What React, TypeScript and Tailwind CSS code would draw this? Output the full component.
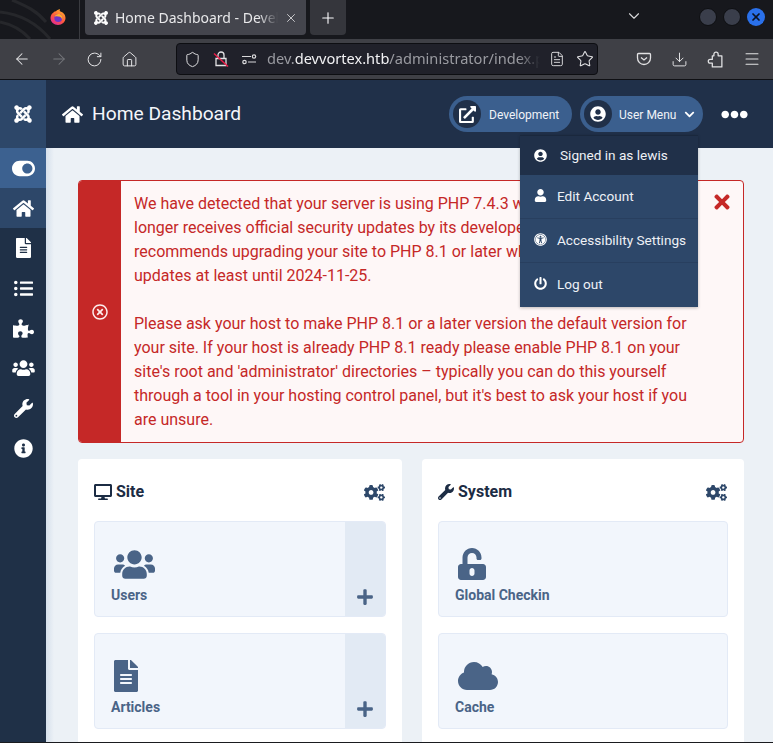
import React from "react";
import { ArrowLeft, ArrowRight, RotateCw, Home, Shield, FileText, Star, Download, Menu, X, Plus, ChevronDown } from "lucide-react";
import { FaHome, FaFileAlt, FaListUl, FaPuzzlePiece, FaUsers, FaWrench, FaInfoCircle, FaToggleOn, FaUserCircle, FaUser, FaUniversalAccess, FaPowerOff, FaExternalLinkAlt, FaCogs, FaDesktop, FaPlus, FaUnlockAlt, FaCloud, FaTimes, FaChevronDown, FaJoomla, FaEllipsisH, FaRegTimesCircle } from "react-icons/fa";

function Firefox() {
  return (
    <svg viewBox="0 0 16 16" className="w-[16px] h-[16px]">
      <defs>
        <linearGradient id="ffg" x1="0.8" y1="0" x2="0.2" y2="1">
          <stop offset="0" stopColor="#ffb52e" />
          <stop offset="0.55" stopColor="#ff5a3c" />
          <stop offset="1" stopColor="#e0259a" />
        </linearGradient>
      </defs>
      <path d="M1 6.500C1.500 5 2.500 4 3 4 3.500 3 5 2 6 2.200 7 1 9.500 0 10 0 9.500 1 9.700 1.800 10 2.200 13 3 15.500 5.500 15.500 9 15.500 13 12 16 8 16 4 16 .5 13 .5 9 .5 8 .7 7.200 1 6.500Z" fill="url(#ffg)" />
      <circle cx="8.300" cy="9" r="4" fill="#6d35c8" />
      <path d="M4.500 8C5 5.500 8 4.500 10.500 5.500 12.500 6.500 13 9 12 11 12 8.500 10 7 8 7.500 6.500 7 5 7 4.500 8Z" fill="#ffb02a" />
    </svg>
  );
}

function Chrome() {
  return (
    <div className="flex flex-col shrink-0 text-[#fbfbfe]">
      <div className="h-[39px] bg-[#17181d] flex relative overflow-hidden">
        <svg viewBox="0 0 80 39" className="w-[80px] h-[39px] shrink-0">
          <path d="M0 12C18 14 36 22 50 39M0 22C10 24 22 30 30 39M12 0C26 6 36 10 46 22" stroke="#26272b" strokeWidth="3" fill="none" />
        </svg>
        <div className="w-px h-[39px] bg-[#3a3b40] -ml-px" />
        <div className="absolute left-[50px] top-[9px]"><Firefox /></div>
        <div className="ml-[5px] w-[221px] h-[35px] bg-[#44454d] rounded-b-[4px] flex items-center pl-[8px] pr-[8px] gap-[6px]">
          <FaJoomla className="w-4 h-4 shrink-0 text-white" />
          <span className="text-[14px] whitespace-nowrap overflow-hidden w-[170px] font-['Noto_Sans',sans-serif] text-[#e8e8ea] [mask-image:linear-gradient(to_right,black_88%,transparent)]">Home Dashboard - Development</span>
          <X className="w-[14px] h-[14px] shrink-0 text-[#d8d8da]" strokeWidth={1.5} />
        </div>
        <div className="ml-[4px] w-[36px] h-[35px] bg-[#35363c] rounded-b-[4px] flex items-center justify-center">
          <Plus className="w-[18px] h-[18px]" strokeWidth={1.5} />
        </div>
        <div className="ml-[279px] mt-[7px] h-[14px]">
          <ChevronDown className="w-[18px] h-[18px] text-[#d8d8da]" strokeWidth={1.5} />
        </div>
        <div className="ml-[56px] mt-[8px] flex gap-[6px]">
          <div className="w-[18px] h-[18px] rounded-full bg-[#3a3e4b] border border-[#0e0f12]" />
          <div className="w-[18px] h-[18px] rounded-full bg-[#3a3e4b] border border-[#0e0f12]" />
          <div className="w-[18px] h-[18px] rounded-full bg-[#2a70ea] flex items-center justify-center">
            <X className="w-[12px] h-[12px] text-[#0c1220]" strokeWidth={3.5} />
          </div>
        </div>
      </div>
      <div className="h-[41px] bg-[#3f4046] border-b border-[#0f1014] flex items-center">
        <div className="flex items-center w-[176px] shrink-0 pl-[13px] gap-[18px]">
          <ArrowLeft className="w-[18px] h-[18px] text-[#e6e6e8]" strokeWidth={1.4} />
          <ArrowRight className="w-[18px] h-[18px] ml-[1px] text-[#77787d]" strokeWidth={1.4} />
          <RotateCw className="w-[17px] h-[17px] text-[#e6e6e8]" strokeWidth={1.4} />
          <Home className="w-[17px] h-[17px] text-[#e6e6e8]" strokeWidth={1.4} />
        </div>
        <div className="w-[422px] h-[32px] bg-[#20212a] border border-[#0d0e12] rounded-[4px] flex items-center relative overflow-hidden pl-[7px]">
          <Shield className="w-[17px] h-[17px] shrink-0 text-[#e2e2e4]" strokeWidth={1.4} />
          <svg viewBox="0 0 16 16" className="w-[16px] h-[16px] ml-[12px] shrink-0" fill="none">
            <path d="M3 7.500h10v7H3zM5 7.500V4a3 3 0 0 1 6 0v3.500" stroke="#e2e2e4" strokeWidth="1.3" />
            <path d="M1 2.500 15 15.500" stroke="#f01b48" strokeWidth="1.4" />
          </svg>
          <svg viewBox="0 0 16 16" className="w-[16px] h-[16px] ml-[12px] shrink-0" fill="none" stroke="#d8d8da" strokeWidth="1.2">
            <path d="M1 5.500h9M7 11h8" />
            <circle cx="13" cy="5.500" r="1.700" />
            <circle cx="3.500" cy="11" r="1.700" />
          </svg>
          <span className="ml-[10px] text-[14.6px] whitespace-nowrap font-['Noto_Sans',sans-serif] text-[#9a9ba1] w-[273px] overflow-hidden [mask-image:linear-gradient(to_right,black_92%,transparent)]">
            dev.<span className="text-[#f2f2f4]">devvortex.htb</span>/administrator/index.php
          </span>
          <FileText className="w-[16px] h-[16px] ml-[9px] shrink-0 text-[#e2e2e4]" strokeWidth={1.4} />
          <Star className="w-[18px] h-[18px] ml-[11px] shrink-0 text-[#e2e2e4]" strokeWidth={1.4} />
        </div>
        <div className="flex items-center ml-[38px] gap-[19px]">
          <svg viewBox="0 0 16 16" className="w-[16px] h-[16px]" fill="none" stroke="#e2e2e4" strokeWidth="1.3">
            <path d="M2.500 2.500h11a1 1 0 0 1 1 1V7a6.500 6.500 0 0 1-13 0V3.500a1 1 0 0 1 1-1Z" />
            <path d="M5 6.500 8 9l3-2.500" />
          </svg>
          <Download className="w-[17px] h-[17px] text-[#e2e2e4]" strokeWidth={1.4} />
          <svg viewBox="0 0 16 16" className="w-[17px] h-[17px]" fill="none" stroke="#e2e2e4" strokeWidth="1.2" strokeLinejoin="round">
            <path d="M6.500 4.500V3a2 2 0 0 1 4 0v1.500H14V15H5v-3.500H3a1.800 1.800 0 0 1 0-3.600h2V4.500Z" />
          </svg>
          <Menu className="w-[18px] h-[18px] text-[#e2e2e4]" strokeWidth={1.4} />
        </div>
      </div>
    </div>
  );
}

const side = [
  { I: FaFileAlt, c: "w-[15px] h-[20px]" },
  { I: FaListUl, c: "w-[19px] h-[19px]" },
  { I: FaPuzzlePiece, c: "w-[21px] h-[19px]" },
  { I: FaUsers, c: "w-[23px] h-[18px]" },
  { I: FaWrench, c: "w-[19px] h-[19px]" },
  { I: FaInfoCircle, c: "w-[19px] h-[19px]" },
];

function Sidebar() {
  return (
    <div className="w-[46px] shrink-0 bg-[#1f3047] text-white flex flex-col">
      <div className="h-[68px] bg-[#2d4769] flex items-center justify-center">
        <FaJoomla className="w-5 h-5" />
      </div>
      <div className="h-[40px] bg-[#3c6190] flex items-center justify-center"><FaToggleOn className="w-[23px] h-[23px]" /></div>
      <div className="h-[40px] bg-[#2d4769] flex items-center justify-center"><FaHome className="w-[21px] h-[19px]" /></div>
      {side.map(({ I, c }, i) => (
        <div key={i} className="h-[40px] flex items-center justify-center"><I className={c} /></div>
      ))}
    </div>
  );
}

function Pill({ icon, label, chevron }: { icon: React.ReactNode; label: string; chevron?: boolean }) {
  return (
    <div className="w-[123px] h-[36px] rounded-full bg-[#3b5f8e] flex items-center pl-[4px]">
      <span className="w-[28px] h-[28px] rounded-full bg-[#203049] flex items-center justify-center text-white">{icon}</span>
      <span className={`${chevron ? "ml-[7px]" : "ml-[8px]"} pt-[1px] text-[12px] text-[#f0f3f8]`}>{label}</span>
      {chevron && <FaChevronDown className="w-[11px] h-[11px] ml-[8px] text-white" />}
    </div>
  );
}

function Header() {
  return (
    <div className="h-[68px] shrink-0 bg-[#203049] flex items-center text-white pl-[16px] relative">
      <FaHome className="w-[21px] h-[19px]" />
      <span className="ml-[9px] text-[19.2px] text-[#f4f6fa]">Home Dashboard</span>
      <div className="ml-auto flex items-center gap-[8px]">
        <Pill icon={<FaExternalLinkAlt className="w-[17px] h-[17px]" />} label="Development" />
        <Pill icon={<FaUserCircle className="w-[16px] h-[16px]" />} label="User Menu" chevron />
      </div>
      <FaEllipsisH className="ml-[18px] mr-[25px] w-[27px] h-[27px]" />
      <UserMenu />
    </div>
  );
}

function UserMenu() {
  const rows = [
    { I: FaUser, t: "Edit Account", c: "" },
    { I: FaUniversalAccess, t: "Accessibility Settings", c: "" },
    { I: FaPowerOff, t: "Log out", c: "pb-[1px]" },
  ];
  return (
    <div className="absolute left-[474px] top-[55px] w-[178px] z-10 shadow-[0_1px_3px_rgba(0,0,0,0.25)] text-[13.6px] text-[#eef1f6]">
      <div className="h-[40px] bg-[#203049] border-t border-[#1a283d] flex items-center pl-[14px]">
        <FaUserCircle className="w-[13px] h-[13px] text-white" />
        <span className="ml-[13px]">Signed in as lewis</span>
      </div>
      {rows.map((r, i) => (
        <div key={r.t} className={`h-[44px] bg-[#2d4769] flex items-center pl-[14px] ${r.c} ${i < 2 ? "border-b border-[#283f5f]" : ""}`}>
          <r.I className="w-[13px] h-[13px] -mt-[2px] text-white" />
          <span className="ml-[10px]">{r.t}</span>
        </div>
      ))}
    </div>
  );
}

function Alert() {
  return (
    <div className="flex rounded-[4px] border border-[#c52827] bg-[#fef7f7] h-[263px] relative overflow-hidden">
      <div className="w-[42px] shrink-0 bg-[#c52827] flex items-center justify-center">
        <FaRegTimesCircle className="w-[16px] h-[16px] text-[#fdeeee]" />
      </div>
      <div className="pl-[13px] pt-[11px] pr-[42px] text-[16px] leading-[24px] text-[#c52827]">
        <p>We have detected that your server is using PHP 7.4.3 which is obsolete and no longer receives official security updates by its developers. The Joomla! Project recommends upgrading your site to PHP 8.1 or later which will receive security updates at least until 2024-11-25.</p>
        <p className="mt-[24px]">Please ask your host to make PHP 8.1 or a later version the default version for your site. If your host is already PHP 8.1 ready please enable PHP 8.1 on your site's root and 'administrator' directories – typically you can do this yourself through a tool in your hosting control panel, but it's best to ask your host if you are unsure.</p>
      </div>
      <FaTimes className="absolute right-[10px] top-[10px] w-[22px] h-[22px] text-[#c52827]" />
    </div>
  );
}

function Tile({ icon, label, plus }: { icon: React.ReactNode; label: string; plus?: boolean }) {
  return (
    <div className="h-[96px] rounded-[4px] border border-[#e3eaf6] bg-[#f2f6fc] flex overflow-hidden">
      <div className="flex-1 pl-[16px] pt-[26px] text-[#4a6487]">
        <div className="h-[32px] pl-[3px] flex items-center">{icon}</div>
        <div className="mt-[5px] text-[14px] leading-[20px] font-bold">{label}</div>
      </div>
      {plus && (
        <div className="w-[40px] bg-[#e2eaf4] flex items-end justify-center pb-[10px] text-[#4a6487]">
          <FaPlus className="w-[18px] h-[18px]" />
        </div>
      )}
    </div>
  );
}

function Card({ icon, title, children, className }: { icon: React.ReactNode; title: string; children: React.ReactNode; className: string }) {
  return (
    <div className={`${className} bg-white rounded-t-[4px] px-[16px] pt-[23px]`}>
      <div className="flex items-center h-[20px] pr-[1px] text-[#1c2c44]">
        {icon}
        <span className="ml-[4px] text-[16px] font-bold">{title}</span>
        <FaCogs className="ml-auto w-[21px] h-[21px] text-[#2d4769]" />
      </div>
      <div className="mt-[19px] flex flex-col gap-[16px]">{children}</div>
    </div>
  );
}

export default function App() {
  return (
    <div className="w-[773px] h-[743px] overflow-hidden flex flex-col font-['Roboto',sans-serif] border-b border-[#1a1b1f]">
      <Chrome />
      <div className="flex flex-1 min-h-0">
        <Sidebar />
        <div className="flex-1 min-w-0 flex flex-col bg-[#ecf1f6] relative">
          <Header />
          <div className="absolute left-0 top-[68px] bottom-0 w-[8px] bg-gradient-to-r from-[#d6e0ec] to-transparent" />
          <div className="pl-[32px] pr-[29px] pt-[32px] relative">
            <Alert />
            <div className="mt-[16px] flex gap-[20px]">
              <Card className="w-[324px] h-[300px]" icon={<FaDesktop className="w-[18px] h-[18px]" />} title="Site">
                <Tile icon={<FaUsers className="w-[41px] h-[33px]" />} label="Users" plus />
                <Tile icon={<FaFileAlt className="w-[24px] h-[32px]" />} label="Articles" plus />
              </Card>
              <Card className="w-[322px] h-[300px]" icon={<FaWrench className="w-[16px] h-[16px]" />} title="System">
                <Tile icon={<FaUnlockAlt className="w-[28px] h-[32px]" />} label="Global Checkin" />
                <Tile icon={<FaCloud className="w-[40px] h-[32px]" />} label="Cache" />
              </Card>
            </div>
          </div>
        </div>
      </div>
    </div>
  );
}
